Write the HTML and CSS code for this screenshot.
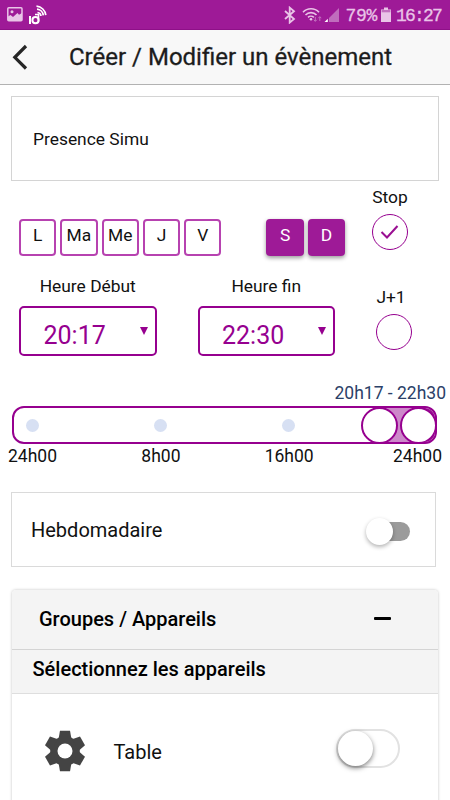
FILE: index.html
```html
<!DOCTYPE html>
<html lang="fr">
<head>
    <meta charset="UTF-8">
    <meta name="viewport" content="width=device-width, initial-scale=1.0">
    <title>Créer / Modifier un évènement</title>
    <link rel="stylesheet" href="styles.css">
</head>
<body>
    <div class="status-bar">
        <svg class="icon-picture" width="16" height="15" viewBox="0 0 16 15">
            <rect x="0.8" y="0.8" width="14.2" height="13" rx="1" fill="none" stroke="#e9c4e7" stroke-width="1.5"/>
            <circle cx="5" cy="4.8" r="1.5" fill="#e9c4e7"/>
            <path d="M1 12V9.5L3.5 8l2.5 2 4.5-4 1.5 1.8L15 6v7H1z" fill="#e9c4e7"/>
        </svg>
        <svg class="icon-io" width="20" height="21" viewBox="0 0 20 21" fill="none" stroke="#fff">
            <path d="M2 12v8" stroke-width="2"/>
            <circle cx="7.5" cy="16.2" r="3.1" stroke-width="2"/>
            <path d="M7 10.5h3.5v7" stroke-width="1.6"/>
            <path d="M9.5 8.5a4 4 0 0 1 3.5 3.5M9 5.2a7 7 0 0 1 6.3 6.2M8.5 2.2a10 10 0 0 1 9.3 9" stroke-width="1.7"/>
        </svg>
        <div class="status-right">
            <svg width="12" height="18" viewBox="0 0 12 18" fill="none" stroke="#e9c4e7" stroke-width="1.8">
                <path d="M1 5l9 8-4.3 3.6V1.6L10 5.2 1 13"/>
            </svg>
            <svg class="icon-wifi" width="20" height="16" viewBox="0 0 20 16" fill="none" stroke="#e9c4e7" stroke-width="1.6">
                <path d="M1 5.2a11 11 0 0 1 16 0M3.5 8a7.5 7.5 0 0 1 11 0M6 10.4a4.2 4.2 0 0 1 5.8 0"/>
                <circle cx="9" cy="12.2" r="1.3" fill="#e9c4e7" stroke="none"/>
                <path d="M13.3 10v4.3m-1.5-1.5l1.5 1.5 1.5-1.5M17.8 14V9.7m-1.5 1.5l1.5-1.5 1.5 1.5" stroke="#c270bf" stroke-width="1"/>
            </svg>
            <svg class="icon-signal" width="16" height="16" viewBox="0 0 16 16">
                <path d="M5 11L15 1v14H5z" fill="#c06dbd"/>
                <path d="M0.5 15L3.8 11.8V15z" fill="#fff"/>
            </svg>
            <span class="battery-text">79%</span>
            <svg class="icon-battery" width="10" height="16" viewBox="0 0 10 16">
                <path d="M3 0.5h4v2h3V15H0V2.5h3z" fill="#e9c4e7"/>
                <path d="M0.6 3h8.8v2.3H0.6z" fill="#c270bf"/>
            </svg>
            <span class="clock">16:27</span>
        </div>
    </div>

    <div class="header">
        <svg width="16" height="26" viewBox="0 0 16 26" fill="none" stroke="#262626" stroke-width="3.2">
            <path d="M14 2L2.8 13.3 14 24.5"/>
        </svg>
        <h1>Créer / Modifier un évènement</h1>
    </div>

    <div class="name-box">Presence Simu</div>

    <div class="schedule">
        <div class="schedule-main">
            <div class="days">
                <button class="day">L</button>
                <button class="day">Ma</button>
                <button class="day">Me</button>
                <button class="day">J</button>
                <button class="day">V</button>
                <button class="day active weekend">S</button>
                <button class="day active">D</button>
            </div>
            <div class="times">
                <div class="time">
                    <label>Heure Début</label>
                    <div class="time-select">20:17<span class="arrow"></span></div>
                </div>
                <div class="time">
                    <label>Heure fin</label>
                    <div class="time-select">22:30<span class="arrow"></span></div>
                </div>
            </div>
        </div>
        <div class="options">
            <div class="option">
                <label>Stop</label>
                <div class="round">
                    <svg width="20" height="16" viewBox="0 0 20 16" fill="none" stroke="#9a0f92" stroke-width="2">
                        <path d="M1.5 8l5.5 5.5L17.5 2"/>
                    </svg>
                </div>
            </div>
            <div class="option next-day">
                <label>J+1</label>
                <div class="round"></div>
            </div>
        </div>
    </div>

    <div class="range-text">20h17 - 22h30</div>
    <div class="slider">
        <span class="dot"></span>
        <span class="dot"></span>
        <span class="dot"></span>
        <div class="range">
            <span class="handle"></span>
            <span class="handle"></span>
        </div>
    </div>
    <div class="scale">
        <span>24h00</span>
        <span>8h00</span>
        <span>16h00</span>
        <span>24h00</span>
    </div>

    <div class="weekly">
        <span>Hebdomadaire</span>
        <div class="toggle"></div>
    </div>

    <div class="card">
        <div class="card-header">
            <span>Groupes / Appareils</span>
            <span class="minus"></span>
        </div>
        <div class="card-subtitle">Sélectionnez les appareils</div>
        <div class="device">
            <svg class="gear" width="42" height="42" viewBox="-21 -21 42 42">
                <g fill="#444">
                    <circle r="14.8"/>
                    <path id="tooth" d="M-5 -20.2H5L6.5 -12H-6.5z"/>
                    <use href="#tooth" transform="rotate(60)"/>
                    <use href="#tooth" transform="rotate(120)"/>
                    <use href="#tooth" transform="rotate(180)"/>
                    <use href="#tooth" transform="rotate(240)"/>
                    <use href="#tooth" transform="rotate(300)"/>
                </g>
                <circle r="7.5" fill="#fff"/>
            </svg>
            <span class="device-name">Table</span>
            <div class="switch"></div>
        </div>
    </div>
</body>
</html>
```
FILE: styles.css
```css
* {
    box-sizing: border-box;
}

body {
    font-family: Roboto, "Liberation Sans", sans-serif;
    margin: 0;
    height: 800px;
    overflow: hidden;
    background: #fff;
    color: #111;
}

.status-bar {
    display: flex;
    align-items: center;
    height: 30px;
    padding: 0 9px 0 7px;
    background: #9e1a97;
    border-bottom: 1px solid #8e1088;
    color: #e9c4e7;
    font-family: "Liberation Mono", monospace;
    font-size: 18px;
}

.icon-io {
    margin-left: 5px;
}

.status-right {
    display: flex;
    align-items: center;
    margin-left: auto;
}

.status-right span {
    padding-top: 3px;
    -webkit-text-stroke: 0.3px #e9c4e7;
}

.icon-wifi {
    margin-left: 6px;
}

.icon-signal {
    margin-left: 2px;
}

.battery-text {
    margin-left: 5px;
    letter-spacing: -0.3px;
}

.icon-battery {
    margin-left: 4px;
}

.clock {
    margin-left: 5px;
    letter-spacing: -1.8px;
}

.header {
    display: flex;
    align-items: center;
    height: 55px;
    padding-left: 12px;
    background: #f8f8f8;
    border-bottom: 1px solid #b2b2b2;
}

.header h1 {
    margin: 0 0 0 41px;
    font-size: 24px;
    font-weight: 400;
    color: #1c1c1c;
    -webkit-text-stroke: 0.3px #1c1c1c;
    white-space: nowrap;
}

.name-box {
    display: flex;
    align-items: center;
    height: 85px;
    margin: 11px 11px 0;
    padding-left: 21px;
    border: 1px solid #d4d4d4;
    font-size: 17.4px;
}

.schedule {
    display: flex;
    height: 200px;
    padding: 0 19px;
}

.schedule-main {
    width: 335px;
    padding-top: 38px;
}

.days {
    display: flex;
    gap: 4px;
}

.day {
    width: 37.3px;
    height: 37px;
    padding: 0 0 5px;
    border: 2px solid #b742b0;
    border-radius: 4px;
    background: #fff;
    color: #111;
    font-family: inherit;
    font-size: 17.4px;
}

.day.active {
    border-color: #9e1a97;
    background: #9e1a97;
    color: #fff;
    box-shadow: 0 2px 4px rgba(0, 0, 0, 0.4);
}

.day.weekend {
    margin-left: 41px;
}

.times {
    display: flex;
    gap: 41px;
    margin-top: 19px;
}

.time {
    width: 137.5px;
    text-align: center;
    font-size: 17.4px;
    line-height: 22px;
}

.time label {
    display: block;
}

.time-select {
    display: flex;
    align-items: center;
    justify-content: space-between;
    height: 50px;
    margin-top: 9px;
    padding: 10px 7px 0 22.5px;
    border: 2px solid #96008f;
    border-radius: 5px;
    color: #96008f;
    font-size: 25px;
}

.arrow {
    margin-bottom: 10px;
    border: 4px solid transparent;
    border-top: 8px solid #96008f;
    border-bottom: 0;
}

.options {
    padding-top: 5px;
}

.option {
    display: flex;
    flex-direction: column;
    align-items: center;
    width: 72px;
    font-size: 17.4px;
    line-height: 22px;
}

.round {
    display: flex;
    align-items: center;
    justify-content: center;
    width: 36px;
    height: 36px;
    margin-top: 6px;
    border: 1.5px solid #96008f;
    border-radius: 50%;
}

.next-day {
    margin: 36px 0 0 4px;
}

.next-day label {
    margin-right: 6px;
}

.range-text {
    padding-right: 4px;
    text-align: right;
    color: #2b4168;
    font-size: 17.5px;
    line-height: 24px;
}

.slider {
    display: grid;
    grid-template-columns: 128px 128px 91px 75px;
    grid-template-rows: 34px;
    align-items: center;
    width: 425px;
    height: 38px;
    margin: 1px 0 0 12px;
    border: 2px solid #96008f;
    border-radius: 12px;
    overflow: hidden;
}

.dot {
    width: 13px;
    height: 13px;
    margin-left: 12px;
    border-radius: 50%;
    background: #d7e0f3;
}

.range {
    display: flex;
    gap: 2px;
    background: linear-gradient(90deg, transparent 19px, #cd88ca 19px, #cd88ca 58px, #9e1a97 58px);
}

.handle {
    flex: none;
    width: 37px;
    height: 37px;
    border: 2px solid #96008f;
    border-radius: 50%;
    background: #fff;
}

.scale {
    display: grid;
    grid-template-columns: 1fr 1fr 1fr auto;
    padding: 1px 8px 0;
    font-size: 17.5px;
    line-height: 22px;
}

.scale span:nth-child(2) {
    padding-left: 5px;
}

.weekly {
    display: flex;
    align-items: center;
    justify-content: space-between;
    height: 75px;
    margin: 25px 14px 0 11px;
    padding: 0 25px 0 19px;
    border: 1px solid #dadada;
    font-size: 20px;
}

.weekly span {
    padding-top: 1px;
}

.toggle {
    display: flex;
    align-items: center;
    width: 40px;
    height: 19px;
    margin-top: 3px;
    border-radius: 10px;
    background: #9b9b9b;
}

.toggle::before {
    content: "";
    flex: none;
    width: 27px;
    height: 27px;
    margin-left: -4px;
    border-radius: 50%;
    background: #fff;
    box-shadow: 0 2px 4px rgba(0, 0, 0, 0.3);
}

.card {
    height: 240px;
    margin: 23px 12px 0;
    border-radius: 4px 4px 0 0;
    background: #fff;
    box-shadow: 0 0 3px rgba(0, 0, 0, 0.25);
    overflow: hidden;
}

.card-header {
    display: flex;
    align-items: center;
    justify-content: space-between;
    height: 60px;
    padding: 0 47px 2px 27px;
    background: #f4f4f4;
    border-bottom: 1px solid #d4d4d4;
    font-size: 20px;
    font-weight: 500;
    color: #000;
}

.minus {
    width: 17px;
    height: 3px;
    margin-bottom: 1px;
    border-radius: 1px;
    background: #000;
}

.card-subtitle {
    height: 44px;
    padding-left: 20.5px;
    background: #f4f4f4;
    border-bottom: 1px solid #dedede;
    color: #000;
    font-size: 20px;
    font-weight: 500;
    line-height: 39px;
}

.device {
    display: flex;
    align-items: center;
    height: 115px;
    padding: 0 38px 0 32px;
}

.gear {
    margin-bottom: 2px;
}

.device-name {
    margin-left: 27.5px;
    font-size: 20px;
}

.switch {
    width: 64px;
    height: 39px;
    margin: -6px 0 0 auto;
    border: 2px solid #e2e2e2;
    border-radius: 20px;
}

.switch::before {
    content: "";
    display: block;
    width: 35px;
    height: 35px;
    border-radius: 50%;
    background: #fff;
    box-shadow: 0 2px 5px rgba(0, 0, 0, 0.5);
}
```
